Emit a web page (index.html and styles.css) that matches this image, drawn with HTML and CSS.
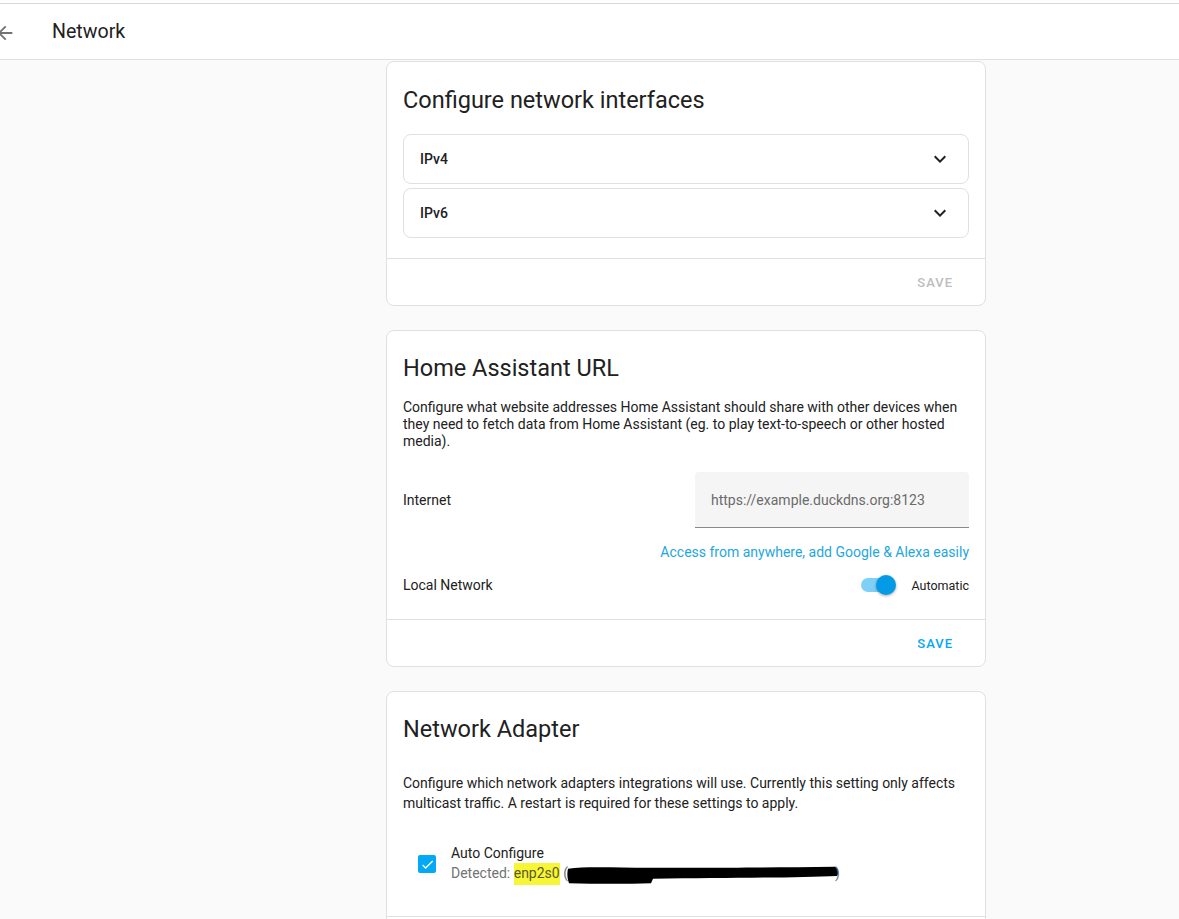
FILE: index.html
```html
<!DOCTYPE html>
<html>
<head>
<meta charset="utf-8">
<link rel="stylesheet" href="styles.css">
</head>
<body>
<div class="topstrip"></div>
<header class="toolbar">
  <svg class="back" viewBox="0 0 24 24"><path d="M20,11V13H8L13.5,18.5L12.08,19.92L4.16,12L12.08,4.08L13.5,5.5L8,11H20Z"/></svg>
  <div class="page-title">Network</div>
</header>
<main class="content">
  <section class="card">
    <h2 class="card-title">Configure network interfaces</h2>
    <div class="card-body panels">
      <div class="panel"><span>IPv4</span><svg class="chev" viewBox="0 0 24 24"><path d="M7.41,8.58L12,13.17L16.59,8.58L18,10L12,16L6,10L7.41,8.58Z"/></svg></div>
      <div class="panel"><span>IPv6</span><svg class="chev" viewBox="0 0 24 24"><path d="M7.41,8.58L12,13.17L16.59,8.58L18,10L12,16L6,10L7.41,8.58Z"/></svg></div>
    </div>
    <div class="card-actions"><span class="btn disabled">SAVE</span></div>
  </section>

  <section class="card">
    <h2 class="card-title url-title">Home Assistant URL</h2>
    <div class="card-body url-body">
      <p class="desc tight">Configure what website addresses Home Assistant should share with other devices when they need to fetch data from Home Assistant (eg. to play text-to-speech or other hosted media).</p>
      <div class="row internet">
        <span class="label">Internet</span>
        <div class="textfield"><span class="placeholder">https://example.duckdns.org:8123</span></div>
      </div>
      <div class="link-row"><a class="link">Access from anywhere, add Google &amp; Alexa easily</a></div>
      <div class="row local">
        <span class="label">Local Network</span>
        <div class="switch-wrap">
          <div class="switch"><div class="track"></div><div class="knob"></div></div>
          <span class="switch-label">Automatic</span>
        </div>
      </div>
    </div>
    <div class="card-actions"><span class="btn">SAVE</span></div>
  </section>

  <section class="card">
    <h2 class="card-title adapter-title">Network Adapter</h2>
    <div class="card-body adapter-body">
      <p class="desc">Configure which network adapters integrations will use. Currently this setting only affects multicast traffic. A restart is required for these settings to apply.</p>
      <div class="check-row">
        <div class="checkbox"><svg viewBox="0 0 24 24"><path d="M21,7L9,19L3.5,13.5L4.91,12.09L9,16.17L19.59,5.59L21,7Z"/></svg></div>
        <div class="check-text">
          <div class="check-label">Auto Configure</div>
          <div class="check-sub">Detected: <mark class="hl">enp2s0</mark> (<span class="redact"><svg viewBox="0 0 272 22" preserveAspectRatio="none"><path d="M1,4 C20,1 50,3 82,3 C120,3 190,3 268,2 C272,4 272,10 270,12 C230,14 160,14 86,15 L84,20 C60,21 30,21 2,20 C0,14 0,9 1,4 Z"/></svg></span>)</div>
        </div>
      </div>
    </div>
    <div class="card-actions last"></div>
  </section>
</main>
</body>
</html>
```
FILE: styles.css
```css
html, body {
  margin: 0;
  padding: 0;
}
body {
  background: #fafafa;
  font-family: Roboto, "Liberation Sans", sans-serif;
  color: #212121;
  width: 1179px;
  height: 919px;
  overflow: hidden;
}
.topstrip {
  height: 3px;
  background: #fff;
}
.toolbar {
  height: 55px;
  background: #fff;
  border-top: 1px solid #d8d8d8;
  border-bottom: 1px solid #e0e0e0;
  display: flex;
  align-items: center;
  position: relative;
}
.back {
  position: absolute;
  left: -6px;
  top: 18px;
  width: 22px;
  height: 22px;
  fill: #727272;
}
.page-title {
  margin-left: 52px;
  font-size: 19.6px;
  font-weight: 400;
  color: #212121;
}
.content {
  padding: 1px 0 0 386px;
  display: flex;
  flex-direction: column;
  gap: 24px;
}
.card {
  width: 598px;
  background: #fff;
  border: 1px solid #e0e0e0;
  border-radius: 8px;
  display: flex;
  flex-direction: column;
}
.card-title {
  margin: 0;
  padding: 22px 16px 0;
  font-size: 23.5px;
  line-height: 32px;
  font-weight: 400;
  color: #212121;
}
.url-title {
  padding-top: 21px;
}
.card-body {
  padding: 0 16px;
}
.panels {
  padding-top: 18px;
  padding-bottom: 20px;
  display: flex;
  flex-direction: column;
  gap: 4px;
}
.panel {
  height: 48px;
  border: 1px solid #e0e0e0;
  border-radius: 8px;
  display: flex;
  align-items: center;
  justify-content: space-between;
  padding: 0 16px;
  font-size: 14px;
  font-weight: 500;
  color: #212121;
}
.chev {
  width: 24px;
  height: 24px;
  fill: #212121;
  margin-right: 0;
}
.card-actions {
  border-top: 1px solid #e0e0e0;
  height: 46px;
  display: flex;
  align-items: center;
  justify-content: flex-end;
  padding: 0 32px 0 0;
}
.btn {
  font-size: 13px;
  font-weight: 500;
  letter-spacing: 1px;
  color: #03a9f4;
}
.btn.disabled {
  color: #bdbdbd;
}
.desc {
  margin: 0;
  font-size: 14px;
  line-height: 20px;
  color: #212121;
}
.desc.tight {
  line-height: 17px;
}
.url-body {
  padding-top: 15px;
  padding-bottom: 24px;
}
.row {
  display: flex;
  align-items: center;
  justify-content: space-between;
  font-size: 14px;
}
.internet {
  margin-top: 22px;
}
.textfield {
  width: 274px;
  height: 56px;
  background: #f5f5f5;
  border-bottom: 1px solid #8a8a8a;
  border-radius: 4px 4px 0 0;
  display: flex;
  align-items: center;
  padding-left: 16px;
  box-sizing: border-box;
}
.placeholder {
  color: #6b6b6b;
  font-size: 14px;
}
.link-row {
  display: flex;
  justify-content: flex-end;
  margin-top: 16px;
}
.link {
  color: #1ea7e0;
  font-size: 14px;
}
.local {
  margin-top: 15px;
}
.switch-wrap {
  display: flex;
  align-items: center;
  gap: 14px;
}
.switch {
  position: relative;
  width: 36px;
  height: 20px;
}
.track {
  position: absolute;
  left: 0;
  top: 3px;
  width: 34px;
  height: 14px;
  border-radius: 7px;
  background: #7fd0f7;
}
.knob {
  position: absolute;
  left: 15px;
  top: 0;
  width: 20px;
  height: 20px;
  border-radius: 50%;
  background: #039be5;
  box-shadow: 0 1px 3px rgba(0,0,0,0.35);
}
.switch-label {
  font-size: 12.5px;
  color: #212121;
}
.adapter-title {
  padding-top: 21px;
}
.adapter-body {
  padding-top: 28px;
  padding-bottom: 31px;
}
.check-row {
  display: flex;
  align-items: center;
  gap: 15px;
  margin-top: 30px;
  padding-left: 15px;
}
.checkbox {
  width: 18px;
  height: 18px;
  border-radius: 2px;
  background: #03a9f4;
  display: flex;
  align-items: center;
  justify-content: center;
}
.checkbox svg {
  width: 15px;
  height: 15px;
  fill: #fff;
}
.check-label {
  font-size: 14px;
  line-height: 20px;
  color: #212121;
}
.check-sub {
  font-size: 14px;
  line-height: 20px;
  color: #727272;
  white-space: nowrap;
}
.hl {
  background: #f6f536;
  color: #5a5a2a;
  padding: 2px 0 4px;
}
.redact {
  display: inline-block;
  width: 272px;
  height: 20px;
  margin-left: -1px;
  margin-right: -4px;
  vertical-align: -7px;
}
.redact svg {
  width: 100%;
  height: 100%;
  fill: #000;
}
.card-actions.last {
  height: 40px;
}
```
